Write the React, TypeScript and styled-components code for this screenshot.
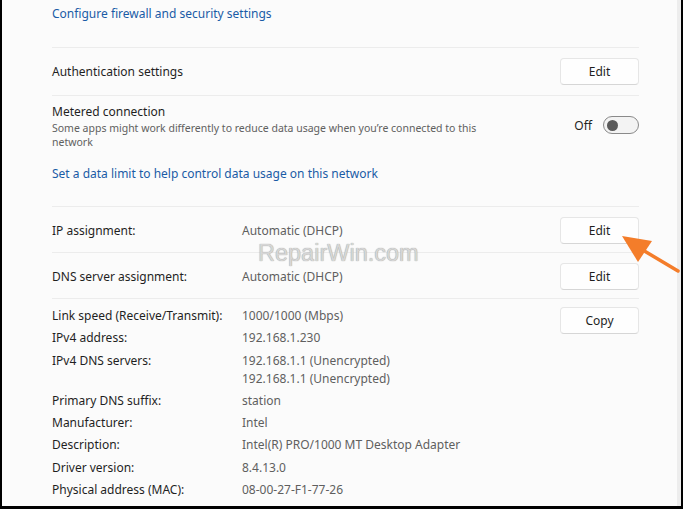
import React from 'react';
import styled, { createGlobalStyle } from 'styled-components';

const GlobalStyle = createGlobalStyle`
  html, body {
    margin: 0;
    padding: 0;
    background: #ffffff;
  }
  body {
    font-family: 'Noto Sans', 'Liberation Sans', sans-serif;
  }
`;

const details: { label: string; values: string[] }[] = [
  { label: 'Link speed (Receive/Transmit):', values: ['1000/1000 (Mbps)'] },
  { label: 'IPv4 address:', values: ['192.168.1.230'] },
  {
    label: 'IPv4 DNS servers:',
    values: ['192.168.1.1 (Unencrypted)', '192.168.1.1 (Unencrypted)'],
  },
  { label: 'Primary DNS suffix:', values: ['station'] },
  { label: 'Manufacturer:', values: ['Intel'] },
  { label: 'Description:', values: ['Intel(R) PRO/1000 MT Desktop Adapter'] },
  { label: 'Driver version:', values: ['8.4.13.0'] },
  { label: 'Physical address (MAC):', values: ['08-00-27-F1-77-26'] },
];

function Toggle() {
  return (
    <ToggleWrap>
      <OffText>Off</OffText>
      <Track>
        <Knob />
      </Track>
    </ToggleWrap>
  );
}

function Arrow() {
  return (
    <ArrowSvg width="683" height="509" viewBox="0 0 683 509">
      <line x1="678" y1="271" x2="636" y2="246" stroke="#f47d2a" strokeWidth="3.5" strokeLinecap="round" />
      <polygon points="622,236 652,241 638,262" fill="#f47d2a" />
    </ArrowSvg>
  );
}

export default function App() {
  return (
    <>
      <GlobalStyle />
      <Frame>
        <Content>
          <TopSection>
            <Link>Configure firewall and security settings</Link>
          </TopSection>

          <Row $tall>
            <Title>Authentication settings</Title>
            <Button>Edit</Button>
          </Row>

          <MeteredSection>
            <MeteredHead>
              <div>
                <Title>Metered connection</Title>
                <Description>
                  Some apps might work differently to reduce data usage when you’re connected to this
                  network
                </Description>
              </div>
              <Toggle />
            </MeteredHead>
            <Link>Set a data limit to help control data usage on this network</Link>
          </MeteredSection>

          <Row>
            <Pair>
              <Label>IP assignment:</Label>
              <Value>Automatic (DHCP)</Value>
            </Pair>
            <Button>Edit</Button>
          </Row>

          <Row>
            <Pair>
              <Label>DNS server assignment:</Label>
              <Value>Automatic (DHCP)</Value>
            </Pair>
            <Button>Edit</Button>
          </Row>

          <DetailsSection>
            <DetailsList>
              {details.map((d) => (
                <DetailRow key={d.label}>
                  <Label>{d.label}</Label>
                  <ValueStack>
                    {d.values.map((v, i) => (
                      <Value key={`${d.label}_${i}`}>{v}</Value>
                    ))}
                  </ValueStack>
                </DetailRow>
              ))}
            </DetailsList>
            <Button>Copy</Button>
          </DetailsSection>

          <Watermark>RepairWin.com</Watermark>
        </Content>
        <Scrollbar />
        <Arrow />
      </Frame>
    </>
  );
}

const Frame = styled.div`
  position: relative;
  box-sizing: border-box;
  width: 683px;
  height: 509px;
  display: flex;
  border-left: 2px solid #000;
  border-right: 2px solid #000;
  border-bottom: 3px solid #000;
  background: #fbfbfb;
  overflow: hidden;
`;

const Content = styled.div`
  position: relative;
  flex: 1;
  display: flex;
  flex-direction: column;
  padding: 0 38px 0 50px;
`;

const Scrollbar = styled.div`
  width: 4px;
  background: #ededed;
`;

const Section = styled.div`
  border-bottom: 1px solid #ececec;
  box-sizing: border-box;
`;

const TopSection = styled(Section)`
  height: 48px;
  padding-top: 5px;
`;

const Row = styled(Section)<{ $tall?: boolean }>`
  height: ${(p) => (p.$tall ? '48px' : '46px')};
  display: flex;
  align-items: center;
  justify-content: space-between;
  padding-top: ${(p) => (p.$tall ? '0' : '2px')};
`;

const MeteredSection = styled(Section)`
  height: 111px;
  padding-top: 7px;
  display: flex;
  flex-direction: column;
  gap: 16px;
`;

const MeteredHead = styled.div`
  display: flex;
  justify-content: space-between;
  align-items: flex-start;
`;

const Link = styled.div`
  font-size: 12px;
  color: #1a5ba6;
  line-height: 18px;
`;

const Title = styled.div`
  font-size: 12px;
  color: #1f1f1f;
  line-height: 18px;
`;

const Description = styled.div`
  width: 440px;
  font-size: 10.5px;
  color: #606060;
  line-height: 14px;
`;

const ToggleWrap = styled.div`
  display: flex;
  align-items: center;
  gap: 11px;
  margin-top: 13px;
`;

const OffText = styled.span`
  font-size: 12px;
  color: #1f1f1f;
`;

const Track = styled.div`
  box-sizing: border-box;
  width: 36px;
  height: 18px;
  border: 1px solid #8a8a8a;
  border-radius: 9px;
  background: #f3f3f3;
  display: flex;
  align-items: center;
  padding-left: 3px;
`;

const Knob = styled.div`
  width: 11px;
  height: 11px;
  border-radius: 50%;
  background: #5a5a5a;
`;

const Button = styled.div`
  box-sizing: border-box;
  width: 79px;
  height: 27px;
  display: flex;
  align-items: center;
  justify-content: center;
  background: #fefefe;
  border: 1px solid #e6e6e6;
  border-bottom-color: #d6d6d6;
  border-radius: 4px;
  font-size: 12px;
  color: #1f1f1f;
`;

const Pair = styled.div`
  display: grid;
  grid-template-columns: 190px auto;
`;

const Label = styled.div`
  font-size: 12px;
  color: #1f1f1f;
  line-height: 18px;
`;

const Value = styled.div`
  font-size: 12px;
  color: #5f5f5f;
  line-height: 18px;
`;

const DetailsSection = styled.div`
  flex: 1;
  display: flex;
  justify-content: space-between;
  align-items: flex-start;
  padding-top: 8px;
`;

const DetailsList = styled.div`
  display: flex;
  flex-direction: column;
  gap: 4.3px;
`;

const DetailRow = styled.div`
  display: grid;
  grid-template-columns: 190px auto;
`;

const ValueStack = styled.div`
  display: flex;
  flex-direction: column;
`;

const Watermark = styled.div`
  position: absolute;
  left: 256px;
  top: 240px;
  font-family: 'Liberation Sans', Arial, sans-serif;
  font-size: 23.5px;
  color: #d6d6d6;
  text-shadow: 0 0 1px #888888;
  pointer-events: none;
`;

const ArrowSvg = styled.svg`
  position: absolute;
  left: -2px;
  top: 0;
  pointer-events: none;
`;
